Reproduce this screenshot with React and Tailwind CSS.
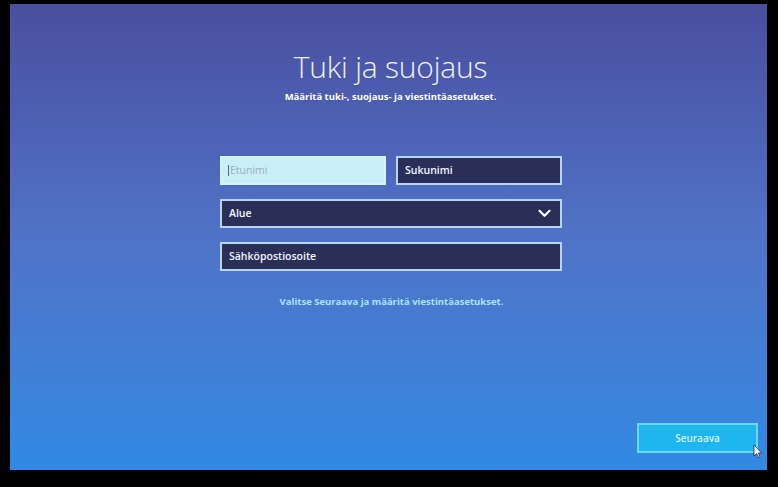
import React from 'react';

const Field = ({ children, className = '' }) => (
  <div
    className={`flex h-[29px] items-center border-2 border-[#b9d4f2] bg-[#2a2f58] px-[7px] text-[10.5px] font-semibold text-[#f4f6ff] ${className}`}
  >
    {children}
  </div>
);

const App = () => {
  return (
    <div className="flex h-[487px] w-[778px] bg-black pl-[10px] pt-[4px]" style={{ fontFamily: '"Open Sans", "Noto Sans", sans-serif' }}>
      <div className="relative flex h-[466px] w-[757px] flex-col bg-gradient-to-b from-[#4a4e9e] via-[#4f73c8] to-[#2f89e3]">
        {/* Heading */}
        <div className="flex flex-col items-center pt-[45px] pl-[4px]">
          <h1 className="text-[30px] font-light leading-[36px] tracking-[-0.2px] text-[#eef1fb]">
            Tuki ja suojaus
          </h1>
          <p className="mt-[5px] text-[9.5px] font-bold text-white">
            Määritä tuki-, suojaus- ja viestintäasetukset.
          </p>
        </div>

        {/* Form */}
        <div className="ml-[210px] mt-[52px] flex w-[342px] flex-col gap-[14px]">
          <div className="flex gap-[10px]">
            <div className="flex h-[29px] w-[166px] items-center border-2 border-[#d8f2fb] bg-[#c9eef8] px-[6px] text-[10.5px] text-[#9aaeb6]">
              <span className="mr-[1px] h-[11px] w-px bg-[#56686f]" />
              Etunimi
            </div>
            <Field className="flex-1">Sukunimi</Field>
          </div>
          <Field className="justify-between font-bold">
            <span>Alue</span>
            <svg width="13" height="9" viewBox="0 0 13 9" fill="none" stroke="white" strokeWidth="2.2" strokeLinecap="round" strokeLinejoin="round" className="mr-[2px]">
              <path d="M1.5 1.8 L6.5 6.8 L11.5 1.8" />
            </svg>
          </Field>
          <Field>Sähköpostiosoite</Field>
        </div>

        <p className="mt-[24px] pl-[6px] text-center text-[9.5px] font-bold text-[#a6e4ff]">
          Valitse Seuraava ja määritä viestintäasetukset.
        </p>

        {/* Next button */}
        <div className="mt-auto flex justify-end pb-[17px] pr-[9px]">
          <button className="flex h-[30px] w-[121px] items-center justify-center border-2 border-[#6fd6f8] bg-[#1fb6ef] text-[10px] font-semibold text-[#d8f4ff]">
            Seuraava
          </button>
        </div>

        {/* Mouse cursor */}
        <svg className="absolute left-[743px] top-[440px]" width="10" height="15" viewBox="0 0 10 15">
          <path d="M1 1 L1 12 L3.6 9.6 L5.4 13.6 L7 12.9 L5.3 9 L8.8 9 Z" fill="white" stroke="#1d2a44" strokeWidth="0.8" />
        </svg>
      </div>
    </div>
  );
};

export default App;
